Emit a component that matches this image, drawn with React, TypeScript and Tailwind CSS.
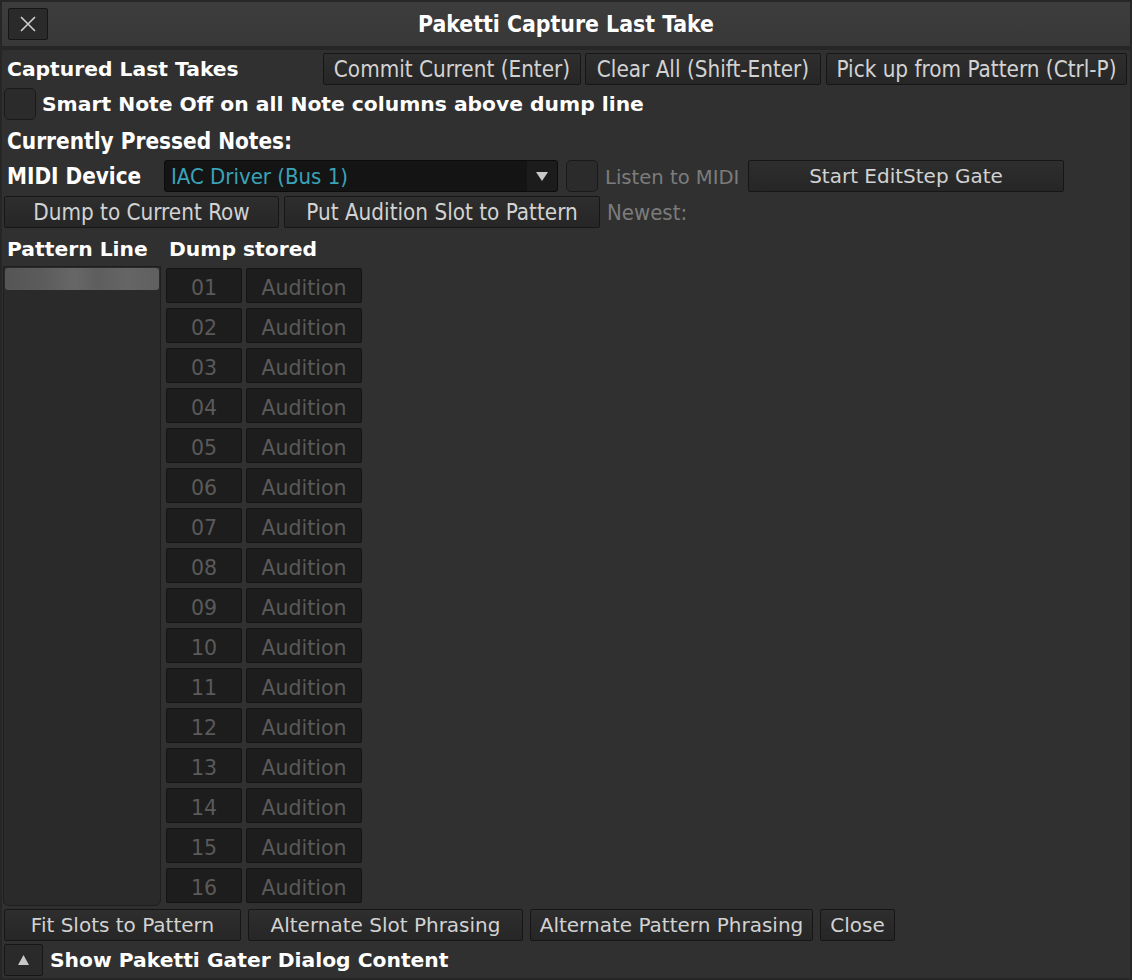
import React from "react";

const C = '"DejaVu Sans Condensed", "DejaVu Sans", sans-serif';
const R = '"DejaVu Sans", sans-serif';

function Btn({ w, children, cond = false }: { w: number; children: React.ReactNode; cond?: boolean }) {
  return (
    <div
      className={`h-[32px] shrink-0 flex items-center justify-center rounded-[2px] border border-[#161616] bg-gradient-to-b from-[#2e2e2e] to-[#262626] text-[#d2d2d2] leading-none whitespace-nowrap ${cond ? "text-[22.3px]" : "text-[20px]"}`}
      style={{ width: w, fontFamily: cond ? C : R }}
    >
      {children}
    </div>
  );
}

function Check() {
  return <div className="w-[32px] h-[32px] shrink-0 rounded-[5px] border border-[#1a1a1a] bg-[#2b2b2b]" />;
}

export default function App() {
  const slots = Array.from({ length: 16 }, (_, i) => String(i + 1).padStart(2, "0"));
  return (
    <div className="w-[1132px] h-[980px] bg-[#262626] flex flex-col overflow-hidden" style={{ fontFamily: R }}>
      {/* title bar */}
      <div className="mx-[2px] mt-[2px] h-[44px] bg-gradient-to-b from-[#3d3d3d] to-[#383838] relative flex items-center justify-center">
        <div className="absolute left-[6px] top-[6px] w-[40px] h-[32px] rounded-[2px] border border-[#161616] bg-[#2a2a2a] flex items-center justify-center">
          <svg width="20" height="20" viewBox="0 0 20 20">
            <path d="M3 3 L17 17 M17 3 L3 17" stroke="#cfcfcf" strokeWidth="1.6" />
          </svg>
        </div>
        <span className="text-white font-bold text-[22.8px] whitespace-nowrap" style={{ fontFamily: C }}>Paketti Capture Last Take</span>
      </div>
      <div className="h-[4px]" />
      {/* content */}
      <div className="mx-[2px] flex-1 mb-[2px] bg-[#303030] flex flex-col pt-[3px]">
        {/* row 1 */}
        <div className="flex items-center h-[32px]">
          <div className="pl-[5px] w-[321px] text-white font-bold text-[20.3px] whitespace-nowrap">Captured Last Takes</div>
          <Btn w={258} cond>Commit Current (Enter)</Btn>
          <div className="w-[4px]" />
          <Btn w={236} cond>Clear All (Shift-Enter)</Btn>
          <div className="w-[5px]" />
          <Btn w={301} cond>Pick up from Pattern (Ctrl-P)</Btn>
        </div>
        {/* row 2 */}
        <div className="flex items-center h-[32px] mt-[3px] pl-[2px]">
          <Check />
          <span className="ml-[6px] text-white font-bold text-[20.3px] whitespace-nowrap">Smart Note Off on all Note columns above dump line</span>
        </div>
        {/* row 3 */}
        <div className="flex items-center h-[32px] mt-[4px] pl-[5px] pt-[3px]">
          <span className="text-white font-bold text-[22.4px] whitespace-nowrap" style={{ fontFamily: C }}>Currently Pressed Notes:</span>
        </div>
        {/* row 4 */}
        <div className="flex items-center h-[32px] mt-[4px]">
          <div className="pl-[5px] pt-[2px] w-[162px] text-white font-bold text-[22.3px] whitespace-nowrap" style={{ fontFamily: C }}>MIDI Device</div>
          <div className="w-[394px] h-[32px] rounded-[3px] border border-[#0c0c0c] bg-[#141414] flex overflow-hidden">
            <div className="flex-1 flex items-center pl-[6px] text-[#3aa3b8] text-[22px] whitespace-nowrap" style={{ fontFamily: C }}>IAC Driver (Bus 1)</div>
            <div className="w-[30px] bg-[#1c1c1c] flex items-center justify-center">
              <svg width="12" height="10" viewBox="0 0 12 10"><path d="M0 1 L12 1 L6 10 Z" fill="#c8c8c8" /></svg>
            </div>
          </div>
          <div className="w-[8px]" />
          <Check />
          <span className="ml-[7px] pt-[3px] w-[143px] text-[#7c7c7c] text-[19.6px] whitespace-nowrap">Listen to MIDI</span>
          <Btn w={316}>Start EditStep Gate</Btn>
        </div>
        {/* row 5 */}
        <div className="flex items-center h-[32px] mt-[4px] pl-[2px]">
          <Btn w={275} cond>Dump to Current Row</Btn>
          <div className="w-[5px]" />
          <Btn w={316} cond>Put Audition Slot to Pattern</Btn>
          <span className="ml-[7px] text-[#7c7c7c] text-[22px] whitespace-nowrap" style={{ fontFamily: C }}>Newest:</span>
        </div>
        {/* row 6 */}
        <div className="flex items-center h-[32px] mt-[5px]">
          <div className="pl-[5px] w-[167px] text-white font-bold text-[20.3px] whitespace-nowrap">Pattern Line</div>
          <span className="text-white font-bold text-[20.3px] whitespace-nowrap">Dump stored</span>
        </div>
        {/* main area */}
        <div className="flex h-[640px] mt-[1px]">
          <div className="ml-[1px] w-[158px] h-[640px] rounded-b-[6px] border border-[#1e1e1e] bg-[#2a2a2a] p-[1px]">
            <div
              className="h-[22px] rounded-[3px]"
              style={{ background: "linear-gradient(90deg,#555 0%,#5c5c5c 25%,#676767 45%,#5e5e5e 60%,#656565 80%,#606060 100%)" }}
            />
          </div>
          <div className="ml-[5px] flex flex-col gap-[5px] pt-[2px]">
            {slots.map((s) => (
              <div key={s} className="flex gap-[4px] h-[35px]">
                <div className="w-[76px] h-[35px] rounded-[2px] border border-[#141414] bg-[#1d1d1d] flex items-center justify-center pt-[5px] text-[#5a5a5a] text-[20.5px]">{s}</div>
                <div className="w-[116px] h-[35px] rounded-[2px] border border-[#141414] bg-[#1d1d1d] flex items-center justify-center pt-[5px] text-[#5a5a5a] text-[20.5px]">Audition</div>
              </div>
            ))}
          </div>
        </div>
        {/* bottom buttons */}
        <div className="flex items-center h-[32px] mt-[3px] pl-[2px]">
          <Btn w={237}>Fit Slots to Pattern</Btn>
          <div className="w-[7px]" />
          <Btn w={275}>Alternate Slot Phrasing</Btn>
          <div className="w-[7px]" />
          <Btn w={283}>Alternate Pattern Phrasing</Btn>
          <div className="w-[7px]" />
          <Btn w={75}>Close</Btn>
        </div>
        {/* last row */}
        <div className="flex items-center h-[32px] mt-[3px] pl-[2px]">
          <div className="w-[39px] h-[32px] rounded-[2px] border border-[#161616] bg-[#2a2a2a] flex items-center justify-center">
            <svg width="11" height="10" viewBox="0 0 11 10"><path d="M5.5 0 L11 10 L0 10 Z" fill="#c8c8c8" /></svg>
          </div>
          <span className="ml-[7px] text-white font-bold text-[20.3px] whitespace-nowrap">Show Paketti Gater Dialog Content</span>
        </div>
      </div>
    </div>
  );
}
